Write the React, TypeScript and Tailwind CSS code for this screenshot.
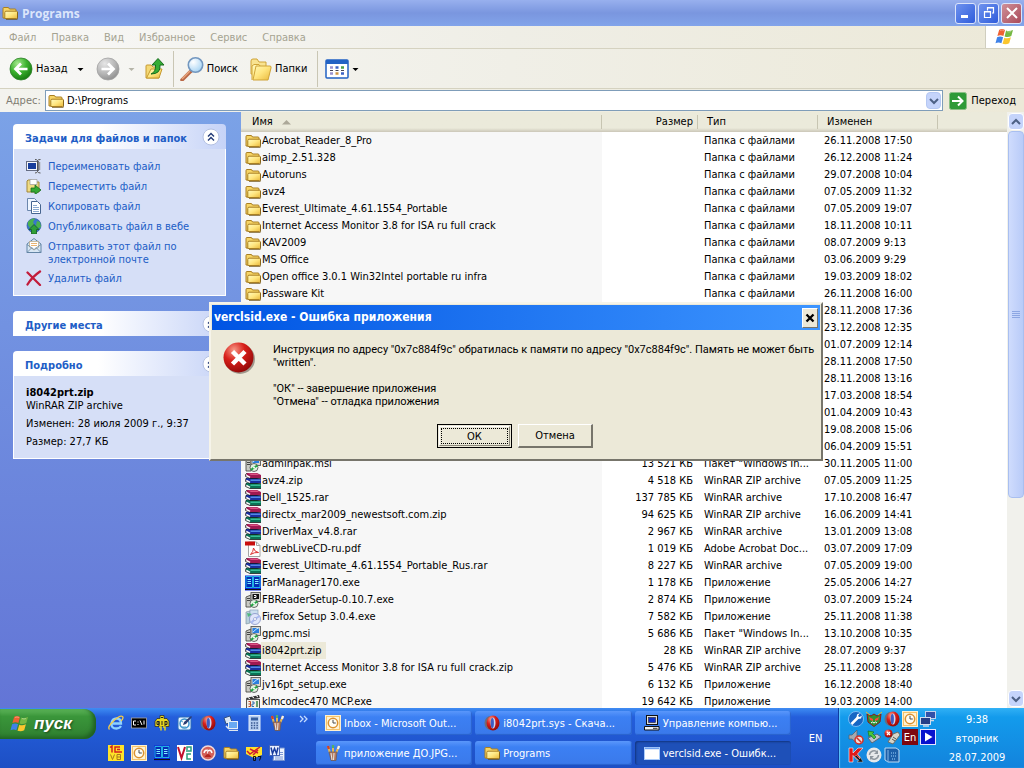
import type { ReactNode } from "react";

type P = { children?: ReactNode; size?: string; box?: string };

function Svg({ children, size = "size-4", box = "0 0 16 16" }: P) {
  return (
    <svg className={`${size} block shrink-0`} viewBox={box} fill="none" aria-hidden="true">
      {children}
    </svg>
  );
}

function Defs() {
  return (
    <svg className="absolute size-0" aria-hidden="true">
      <defs>
        <linearGradient id="gold" x1="0" y1="0" x2="1" y2="1">
          <stop offset="0" stopColor="#fffbc0" />
          <stop offset=".5" stopColor="#ffe680" />
          <stop offset="1" stopColor="#e9b83a" />
        </linearGradient>
        <radialGradient id="green" cx=".35" cy=".25" r=".8">
          <stop offset="0" stopColor="#a5e88f" />
          <stop offset=".5" stopColor="#3cb32f" />
          <stop offset="1" stopColor="#14780f" />
        </radialGradient>
        <radialGradient id="grey" cx=".35" cy=".25" r=".8">
          <stop offset="0" stopColor="#e6e6e6" />
          <stop offset=".6" stopColor="#b5b5b5" />
          <stop offset="1" stopColor="#8e8e8e" />
        </radialGradient>
        <radialGradient id="red" cx=".35" cy=".25" r=".8">
          <stop offset="0" stopColor="#f79a88" />
          <stop offset=".45" stopColor="#d81f1a" />
          <stop offset="1" stopColor="#8f0808" />
        </radialGradient>
        <radialGradient id="glass" cx=".35" cy=".3" r=".8">
          <stop offset="0" stopColor="#ffffff" />
          <stop offset="1" stopColor="#9fd0f3" />
        </radialGradient>
      </defs>
    </svg>
  );
}

const Folder = ({ size }: { size?: string }) => (
  <Svg size={size}>
    <path d="M1 13V3.5Q1 2.5 2 2.5h4Q7 2.5 7.5 4H13q1 0 1 1v8z" fill="#f6d465" stroke="#a97f22" />
    <path d="M2.8 13.5V7.5q0-1.3 1.2-1.3h10.500q1 0 1 1v5.300q0 1-1 1z" fill="url(#gold)" stroke="#a97f22" />
    <path d="M4 14.500h11.500M15.700 7v7" stroke="#6d5012" strokeWidth=".7" />
  </Svg>
);

const Books = () => (
  <Svg>
    <path d="M2 0h10l4 2v3H5L1 3z" fill="#a01a52" />
    <path d="M3 .5h8.500l3 1.500H6z" fill="#dd5584" />
    <path d="M1 5h11l4 1v4H5L1 8z" fill="#1a2fa0" />
    <path d="M5.500 6.500h10V8h-10z" fill="#4f8ae4" />
    <path d="M1 10h11l4 1v4.500H5L1 13z" fill="#0a7355" />
    <path d="M5.500 11.500h10V13h-10z" fill="#38bd95" />
    <path d="M1.300 2.500l3.700 2M1.300 7.500l3.700 2M1.300 12.500l3.700 2" stroke="#fff" strokeWidth="1.600" />
    <path d="M2 0L.5 1.500v2L5 5.500h11M1.500 5L.5 6.500v2l4.500 2h11M1.500 10L.5 11.500v2l4.500 2h11" stroke="#111" strokeWidth=".7" />
  </Svg>
);

const Msi = ({ dark }: { dark?: boolean }) => (
  <Svg>
    <path d="M1 5l5-2v12H1z" fill="#c9cac5" stroke="#4c4c48" strokeWidth=".9" />
    <path d="M2 6.500h3M2 8.500h3" stroke="#444" />
    <rect x="6" y=".5" width="9.500" height="9" fill="#d6d6d0" stroke="#5a5a58" strokeWidth=".9" />
    <rect x="7.500" y="2" width="6.500" height="5" fill={dark ? "#111" : "#2a7fe0"} />
    <path d={dark ? "M9 3.500h2v2H9" : "M8 6l4-3.500h1.500"} stroke={dark ? "#fff" : "#bfe6ff"} />
    <circle cx="9" cy="11.500" r="4" fill="#e2f2e2" stroke="#444" strokeWidth=".8" />
    <path d="M9 11.500l3.500-2M9 11.500l-3 2.500" stroke="#23a442" strokeWidth="2" />
    <circle cx="9" cy="11.500" r="1" fill="#fff" />
  </Svg>
);

const Pdf = () => (
  <Svg>
    <path d="M3.500 1h8l3.500 3.500V15.500H3.500z" fill="#fff" stroke="#a5a5a5" />
    <path d="M11.500 1v3.500H15" stroke="#a5a5a5" />
    <path d="M0 .5h10v4H0z" fill="#c80d0d" />
    <path d="M5.500 13.500q3-3 3-6.500q1 4 5 4.500-4-.5-8 2z" stroke="#d33" />
  </Svg>
);

const Far = () => (
  <Svg>
    <path d="M0 .5h16v15H0z" fill="#0a24d8" />
    <path d="M1 1.500h6.500v11H1zM8.500 1.500H15v11H8.500z" fill="#062bb4" stroke="#27d6ee" strokeWidth=".8" />
    <path d="M2.500 4.500h3.500M2.500 6.500h3.500M2.500 8.500h3.500M10 4.500h3.500M10 6.500h3.500M10 8.500h3.500" stroke="#7ff0ff" />
    <path d="M0 14.500h16" stroke="#111" />
  </Svg>
);

const Firefox = () => (
  <Svg>
    <path d="M1 3l4-1v12l-4 1z" fill="#b9d0dc" stroke="#8296a4" strokeWidth=".7" />
    <rect x="5" y="1" width="8" height="6" fill="#ccdff0" stroke="#8aa3ba" strokeWidth=".7" />
    <path d="M2 4l5 1-4 3z" fill="#4fb77e" />
    <circle cx="10" cy="10" r="5.500" fill="#dfe6fa" stroke="#8492c7" strokeWidth=".8" />
    <path d="M10 10l4.500-3M10 10l-4 4" stroke="#a9b9f0" strokeWidth="2" />
    <circle cx="10" cy="10" r="1.500" fill="#fff" stroke="#8492c7" strokeWidth=".6" />
  </Svg>
);

const Codec = () => (
  <Svg>
    <path d="M1 4l13-3 .8 3L2 6z" fill="#333" />
    <path d="M3 3.500l2 1.500M7 2.500l2 1.500M11 1.500l2 1.500" stroke="#fff" />
    <rect x="1.500" y="5.500" width="13" height="9" fill="#f3f0e6" stroke="#555" />
    <path d="M3.500 7.500h2v5h-2M3.500 10h2" stroke="#b84b2b" />
    <path d="M7 8h2v2H7v2.500h2" stroke="#2d6db4" />
    <path d="M12 7v6" stroke="#3a8441" strokeWidth="1.500" />
  </Svg>
);

const Flag = ({ size }: { size?: string }) => (
  <Svg size={size} box="0 0 20 18">
    <path d="M4.200 1.800Q7 .2 10 1.900L8.400 8Q5.500 6.500 2.400 8z" fill="#ef6132" />
    <path d="M11.100 2.400Q14 3.800 18 1.900L16.300 8Q13 9.600 9.600 8.400z" fill="#75b843" />
    <path d="M2.100 9.200Q5.200 7.600 8.100 9.300L6.400 15.200Q3.500 13.700.5 15.200z" fill="#3f82e8" />
    <path d="M9.300 9.700Q12.300 11.100 15.900 9.300l-1.700 6Q11 17 7.500 15.800z" fill="#fbc62e" />
    <path d="M5 2.500Q7 1.500 9 2.500M12 3.500q2 1 4 0" stroke="#fff" opacity=".35" />
  </Svg>
);

const Opera = () => (
  <Svg>
    <ellipse cx="6.500" cy="8" rx="6" ry="7" fill="#6d6d7a" />
    <ellipse cx="9" cy="8" rx="6.500" ry="7.500" fill="url(#red)" />
    <ellipse cx="9" cy="8" rx="2.500" ry="5.500" fill="#ccd7f5" />
    <ellipse cx="8.300" cy="8" rx="1.600" ry="5" fill="#3d5cc4" />
  </Svg>
);

const Outlook = () => (
  <Svg>
    <rect x=".5" y=".5" width="15" height="15" fill="#f7c46b" stroke="#fff1cf" />
    <rect x="2" y="2" width="12" height="12" fill="#fff3d4" />
    <circle cx="8" cy="8" r="4.700" fill="#fffdf4" stroke="#db9130" strokeWidth="1.500" />
    <path d="M8 4.800V8h2.800" stroke="#4a4a4a" />
  </Svg>
);

const Brushes = () => (
  <Svg>
    <path d="M5 8L3 1M8 8V0M11 8l3-7" stroke="#e6b653" strokeWidth="2" />
    <path d="M3 1l.8 3" stroke="#d43c27" strokeWidth="2.200" />
    <path d="M8 0v3" stroke="#4fb069" strokeWidth="2.200" />
    <path d="M14 1l-1 3" stroke="#f0f0f0" strokeWidth="2.200" />
    <path d="M4 7h8l-1 8.500H6z" fill="#b57a60" stroke="#6a5851" strokeWidth=".7" />
    <path d="M6 8l1 7M9 8l-.5 7" stroke="#e6e6e6" />
  </Svg>
);

const Computer = () => (
  <Svg>
    <rect x="2.500" y=".5" width="11" height="9" fill="#dfdfdf" stroke="#111" />
    <rect x="4.500" y="2.500" width="7" height="5" fill="#0b2ec7" stroke="#223" strokeWidth=".6" />
    <path d="M.5 11.500h14.500v3.500H.5z" fill="#f2f2f2" stroke="#111" />
    <path d="M9 13.300h4.500" stroke="#333" />
  </Svg>
);

const WindowIcon = () => (
  <Svg>
    <rect x=".5" y="2.500" width="15" height="12" fill="#fff" stroke="#aacbfa" />
    <path d="M1 3.500h14" stroke="#6ea0f0" strokeWidth="1.500" />
  </Svg>
);

const Rename = () => (
  <Svg>
    <rect x=".5" y="3.500" width="12" height="9" fill="#f5f7fc" stroke="#656d84" />
    <rect x="2" y="5" width="8" height="6" fill="#173d9c" />
    <path d="M9 1.500q2 0 2.500 1 .5-1 3-1M11.500 2.500v11M9 15q2 0 2.500-1.500.5 1.500 3 1.500" stroke="#555" />
    <path d="M13.500 4v8" stroke="#999" strokeWidth="1.500" />
  </Svg>
);
const Move = () => (
  <Svg>
    <path d="M1 14V3l1-1h4l1.500 2H13v10z" fill="#f0dc83" stroke="#a1873a" />
    <path d="M4 1.500h7v5H4z" fill="#fff" stroke="#999" strokeWidth=".7" />
    <path d="M5 10h4V7l6 5-6 4.500V14H5z" fill="#35a833" stroke="#176d1c" strokeWidth=".8" />
  </Svg>
);
const Copy = () => (
  <Svg>
    <path d="M1.500.5h7l2 2v10h-9z" fill="#eef5ff" stroke="#6b87ad" />
    <path d="M5.500 3.500h6l3 3v9h-9z" fill="#fff" stroke="#46658f" />
    <path d="M7 7.500h4M7 9.500h6M7 11.500h6M7 13.500h6" stroke="#8ba9ce" />
  </Svg>
);
const Publish = () => (
  <Svg>
    <circle cx="8" cy="7.500" r="7" fill="#3976cb" stroke="#2b579b" strokeWidth=".7" />
    <path d="M2 4q3-4 7-3.500L7 4l1 2-4 4-2-3zM11 3l3 1 1 5-4 2-1-4z" fill="#4bb34d" />
    <path d="M8 6.500l5 5h-2.500V16h-5v-4.500H3z" fill="#2f9f38" stroke="#145f1d" strokeWidth=".8" />
  </Svg>
);
const Mail = () => (
  <Svg>
    <path d="M1 6l7-5.500L15 6v8.500H1z" fill="#d8e7f5" stroke="#6385a5" />
    <path d="M3.500 3.500h9v6L8 12 3.500 9z" fill="#fff" stroke="#b9a37d" strokeWidth=".7" />
    <path d="M5 5.500h6M5 7.500h6" stroke="#e2a14e" strokeWidth=".8" />
    <path d="M1 6.500l7 5 7-5M1 14.500l5-5M15 14.500l-5-5" stroke="#6385a5" strokeWidth=".8" />
  </Svg>
);
const Delete = () => (
  <Svg>
    <path d="M1.500 2.500L14 15M14 1.500Q6 7 1.500 14.500" stroke="#c21c3b" strokeWidth="2.300" strokeLinecap="round" />
  </Svg>
);

const IE = () => (
  <Svg>
    <path d="M3.500 8.500h9.500Q13 3.500 8.500 3.500T3.500 8.500t5 5q3 0 4.500-2.500" stroke="#8ed2ff" strokeWidth="2.300" />
    <path d="M1.500 14.500Q-1 12 5.500 6T14.500 1.500Q16 3 13 6" stroke="#f5cb46" strokeWidth="1.300" />
  </Svg>
);
const Cmd = () => (
  <Svg>
    <rect x=".5" y="3" width="15" height="10" fill="#000" stroke="#a9a9a9" strokeWidth=".8" />
    <path d="M5 6H2.500v4H5M7 6.500v1M7 9v1M9 5.500l2 4.500M13 5.500v4" stroke="#fff" />
  </Svg>
);
const Qip = () => (
  <Svg>
    <path d="M6 .5h4v3h3l2 3v5H1v-5l2-3h3z" fill="#e8d820" stroke="#222" strokeWidth=".7" />
    <path d="M3 6.500h2v3H3zM8 6v4M11 6.500h2v3h-2M5 6v6M11 6v6M7 2.500h2" stroke="#222" />
    <path d="M5 12h2v3.500M9 12h2v3.500" stroke="#e8d820" strokeWidth="1.500" />
  </Svg>
);
const Desktop = () => (
  <Svg>
    <rect x="1" y="2" width="13" height="13" rx="2" fill="#e4f3ff" stroke="#2b6db8" />
    <circle cx="7.500" cy="8.500" r="4.500" fill="#fff" stroke="#3c93ce" strokeWidth="1.500" />
    <path d="M6 10l1-3 7-6 1 1-6 7z" fill="#2c3f74" />
    <path d="M4 6l2 1M5 12h4" stroke="#53a4c8" />
  </Svg>
);
const Network = () => (
  <Svg>
    <path d="M1 3l6-2 2 6-6 2z" fill="#dce7f4" stroke="#315083" />
    <rect x="5.500" y="6.500" width="9" height="7" fill="#6aa9f2" stroke="#e9eef6" />
    <path d="M3 11l3 3M6 15.500h9" stroke="#dfe6ef" strokeWidth="1.500" />
  </Svg>
);
const Calc = () => (
  <Svg>
    <rect x="3" y=".5" width="11" height="15" fill="#b4cdf0" stroke="#e2edfb" />
    <rect x="5" y="2.500" width="7" height="3" fill="#365f9e" />
    <path d="M5 8h7M5 10.500h7M5 13h7" stroke="#36568f" strokeWidth="1.500" strokeDasharray="1.500 1.200" />
  </Svg>
);
const OneC = () => (
  <Svg>
    <rect width="16" height="16" fill="#ffe329" />
    <path d="M2 2.500L4 1v6.500M12 2H7v5h7M9 4.500h3" stroke="#d32020" strokeWidth="1.500" />
    <path d="M2.500 9.500l2 5 2-5M9 9.500h3.500v5H9zM9 12h3.500" stroke="#a8791d" />
  </Svg>
);
const Vnc = () => (
  <Svg>
    <rect width="16" height="16" fill="#fff" />
    <path d="M1 2l3.500 11L8 2" stroke="#c2102c" strokeWidth="2" />
    <path d="M10 7V2h4v4h-3M14 9h-4v5h4" stroke="#28a07c" strokeWidth="1.500" />
  </Svg>
);
const RedBall = () => (
  <Svg>
    <circle cx="8" cy="8" r="7" fill="#d2605a" stroke="#f2d9d9" strokeWidth="1.500" />
    <path d="M4 8q1-4 4-2 3-2 4 2" stroke="#fff" strokeWidth="1.500" />
    <path d="M4.500 12Q8 6 11.500 12z" fill="#b3261e" />
    <path d="M7.500 4.500v4" stroke="#f7dedd" />
  </Svg>
);
const V7 = () => (
  <Svg>
    <path d="M0 2h16v8L8 13 0 9z" fill="#ffe12b" />
    <path d="M1 6l3 3 10-7M4 4l8 4M7 10l5-5" stroke="#cf1b34" strokeWidth="1.500" />
    <path d="M7.500 11.500h2v4h-2zM12 11.500h3l-1.500 4" stroke="#111" />
  </Svg>
);
const Word = () => (
  <Svg>
    <path d="M6 3h9.500v12.500H4z" fill="#edf3ff" stroke="#7391cf" />
    <path d="M10 7.500h4M10 9.500h4M6 12h8M6 14h8" stroke="#5d7dc8" strokeWidth=".8" />
    <rect x=".5" y=".5" width="10" height="10" fill="#e7efff" stroke="#4766b6" />
    <path d="M2 2.500l1.500 6 2-5 2 5 1.500-6" stroke="#173b9e" strokeWidth="1.500" />
  </Svg>
);
const Wrench = () => (
  <Svg>
    <circle cx="8" cy="8" r="7.500" fill="#1666c4" stroke="#9fd1ff" strokeWidth=".7" />
    <path d="M3.500 13L10 6.500" stroke="#fff" strokeWidth="2.500" />
    <path d="M9 3.500L8.500 7l1.500 1 3-.5 1-3-2.500 1.500-1.500-1L12 2z" fill="#fff" />
  </Svg>
);
const Bug = () => (
  <Svg>
    <path d="M1 3l4 2 3-2 3 2 4-2-1 8-6 4.500L2 11z" fill="#2f9133" stroke="#8c1818" />
    <path d="M3 6l4 2v2L4 9zM13 6L9 8v2l3-1z" fill="#ff4938" />
    <path d="M5 12l1.500-1L8 12l1.500-1 1.500 1" stroke="#fff" />
    <path d="M0 1l4 3M16 1l-4 3" stroke="#e5b932" />
  </Svg>
);
const Screens = () => (
  <Svg>
    <rect x="5.500" y=".5" width="10" height="7" fill="#3151a8" stroke="#c3d3ec" />
    <rect x=".5" y="6.500" width="10" height="7" fill="#263e87" stroke="#d3deee" />
    <path d="M3 15h6M11 9.500h3" stroke="#cdd8e8" strokeWidth="1.500" />
  </Svg>
);
const Muted = () => (
  <Svg>
    <path d="M1 6h3l5-5v13L4 10H1z" fill="#a5a9af" stroke="#555c67" strokeWidth=".7" />
    <circle cx="11" cy="11" r="4" fill="#f1dbd8" stroke="#d32e25" strokeWidth="1.500" />
    <path d="M8.500 8.500l5 5" stroke="#d32e25" strokeWidth="1.500" />
  </Svg>
);
const Eject = () => (
  <Svg>
    <path d="M2 9l9-4 4 3-9 6z" fill="#bcc2ca" stroke="#5d6673" />
    <path d="M2 2l6 1-1.500 1.500L10 8 8 10 4.500 6 3 7.500z" fill="#49c63b" stroke="#16751c" strokeWidth=".7" />
  </Svg>
);
const Cable = () => (
  <Svg>
    <path d="M9 5l5-2 2 3-7 9-5-2z" fill="#d7d5ca" stroke="#6d6d67" />
    <path d="M9 8l3 2M8 10l3 2" stroke="#555" />
    <circle cx="4.500" cy="4.500" r="4" fill="url(#red)" />
    <path d="M3 3l3 3M6 3L3 6" stroke="#fff" strokeWidth="1.200" />
  </Svg>
);
const Lang = () => (
  <Svg>
    <rect width="16" height="16" fill="#7d0710" />
    <text x="8" y="12" textAnchor="middle" fontFamily="DejaVu Sans Condensed, sans-serif" fontSize="11" fill="#fff">
      En
    </text>
  </Svg>
);
const Play = () => (
  <Svg>
    <rect x=".5" y=".5" width="15" height="15" fill="#0712ce" stroke="#e6e6ff" />
    <path d="M5 3.500v9L12.500 8z" fill="#fff" />
  </Svg>
);
const Kaspersky = () => (
  <Svg>
    <path d="M1 1h4v5l5-5h5L9.500 7l3 4-3 2L5 8.500V15H1z" fill="#e01919" stroke="#fff" strokeWidth=".6" />
    <path d="M8 8l4 4V9.500l3 5.500H9l2-1.500-4-4z" fill="#111" stroke="#ddd" strokeWidth=".4" />
  </Svg>
);
const Sync = () => (
  <Svg>
    <circle cx="8" cy="8" r="7.500" fill="#e6e8ea" />
    <path d="M3.500 8a4.500 4.500 0 018-2.500M12.500 8a4.500 4.500 0 01-8 2.500" stroke="#8e969e" strokeWidth="1.500" />
    <path d="M12 3v4H8zM4 13V9h4z" fill="#8e969e" />
  </Svg>
);
const BlueBook = () => (
  <Svg>
    <path d="M1 1h11l3 2v12H4l-3-2z" fill="#1c5fa9" stroke="#bedbf3" />
    <path d="M4 3v12" stroke="#85b9e8" />
    <path d="M7 6h5M7 9h5M8 12h4" stroke="#9ed5ff" strokeDasharray="1 1" />
  </Svg>
);

const DownTri = ({ faded }: { faded?: boolean }) => (
  <Svg size="size-2" box="0 0 8 8">
    <path d="M1.500 3h6L4.500 6z" fill={faded ? "#b5b4a8" : "#000"} />
  </Svg>
);

const icons = { folder: Folder, books: Books, msi: Msi, fb: () => <Msi dark />, pdf: Pdf, far: Far, firefox: Firefox, codec: Codec };
type Row = [keyof typeof icons | null, string, string, string, string];
const dir = "Папка с файлами";
const rar = "WinRAR ZIP archive";
const exe = "Приложение";
const rows: Row[] = [
  ["folder", "Acrobat_Reader_8_Pro", "", dir, "26.11.2008 17:50"],
  ["folder", "aimp_2.51.328", "", dir, "26.12.2008 11:24"],
  ["folder", "Autoruns", "", dir, "29.07.2008 10:04"],
  ["folder", "avz4", "", dir, "07.05.2009 11:32"],
  ["folder", "Everest_Ultimate_4.61.1554_Portable", "", dir, "07.05.2009 19:07"],
  ["folder", "Internet Access Monitor 3.8 for ISA ru full crack", "", dir, "18.11.2008 10:11"],
  ["folder", "KAV2009", "", dir, "08.07.2009 9:13"],
  ["folder", "MS Office", "", dir, "03.06.2009 9:29"],
  ["folder", "Open office 3.0.1 Win32Intel portable ru infra", "", dir, "19.03.2009 18:02"],
  ["folder", "Passware Kit", "", dir, "26.11.2008 16:00"],
  [null, "", "", "", "28.11.2008 17:36"],
  [null, "", "", "", "23.12.2008 12:35"],
  [null, "", "", "", "01.07.2009 12:14"],
  [null, "", "", "", "28.11.2008 17:50"],
  [null, "", "", "", "28.11.2008 13:16"],
  [null, "", "", "", "17.03.2008 18:54"],
  [null, "", "", "", "01.04.2009 10:43"],
  [null, "", "", "", "19.08.2008 15:06"],
  [null, "", "", "", "06.04.2009 15:51"],
  ["msi", "adminpak.msi", "13 521 КБ", 'Пакет "Windows In...', "30.11.2005 11:00"],
  ["books", "avz4.zip", "4 518 КБ", rar, "07.05.2009 11:25"],
  ["books", "Dell_1525.rar", "137 785 КБ", "WinRAR archive", "17.10.2008 16:47"],
  ["books", "directx_mar2009_newestsoft.com.zip", "94 625 КБ", rar, "16.06.2009 14:41"],
  ["books", "DriverMax_v4.8.rar", "2 967 КБ", "WinRAR archive", "13.01.2009 13:08"],
  ["pdf", "drwebLiveCD-ru.pdf", "1 019 КБ", "Adobe Acrobat Doc...", "03.07.2009 17:09"],
  ["books", "Everest_Ultimate_4.61.1554_Portable_Rus.rar", "8 227 КБ", "WinRAR archive", "07.05.2009 19:00"],
  ["far", "FarManager170.exe", "1 178 КБ", exe, "25.05.2006 14:27"],
  ["fb", "FBReaderSetup-0.10.7.exe", "2 874 КБ", exe, "03.07.2009 15:24"],
  ["firefox", "Firefox Setup 3.0.4.exe", "7 582 КБ", exe, "25.11.2008 11:38"],
  ["msi", "gpmc.msi", "5 686 КБ", 'Пакет "Windows In...', "13.10.2008 10:35"],
  ["books", "i8042prt.zip", "28 КБ", rar, "28.07.2009 9:37"],
  ["books", "Internet Access Monitor 3.8 for ISA ru full crack.zip", "5 476 КБ", rar, "25.11.2008 13:28"],
  ["msi", "jv16pt_setup.exe", "6 132 КБ", exe, "16.12.2008 18:40"],
  ["codec", "klmcodec470 MCP.exe", "19 642 КБ", exe, "19.03.2009 14:00"],
];

function TitleBar() {
  const btn = "flex size-[21px] items-center justify-center rounded-[3px] border border-[#dbe4fb]";
  return (
    <header className="flex h-[26px] shrink-0 items-center bg-linear-to-b from-[#98b0ee] via-[#7a96df] to-[#82a4ea] pr-0.5 pl-0.5">
      <Folder />
      <h1 className="ml-1 flex-1 [font-family:'Open_Sans',sans-serif] text-[12px] font-bold text-[#dce6fb]">Programs</h1>
      <div className="flex gap-0.5">
        <button aria-label="Свернуть" className={`${btn} bg-linear-to-br from-[#6f92ee] to-[#2f5bdb]`}>
          <Svg><path d="M3 11.500h7" stroke="#fff" strokeWidth="3" /></Svg>
        </button>
        <button aria-label="Восстановить" className={`${btn} bg-linear-to-br from-[#6f92ee] to-[#2f5bdb]`}>
          <Svg><path d="M6.500 5.500v-3h6v5.500H11M6 3h7M3.500 6.500h6v6h-6zM3 7h7" stroke="#fff" strokeWidth="1.200" /></Svg>
        </button>
        <button aria-label="Закрыть" className={`${btn} bg-linear-to-br from-[#cf9099] to-[#a9495a]`}>
          <Svg><path d="M3 3l10 10M13 3L3 13" stroke="#fff" strokeWidth="2" /></Svg>
        </button>
      </div>
    </header>
  );
}

function Menu() {
  return (
    <nav className="flex h-[23px] shrink-0 border-b border-[#d5d2c0] bg-linear-to-r from-[#f8f8f7] via-[#efeee6] to-[#ece9d8]">
      <div className="flex flex-1 items-center gap-[15px] pl-[9px] text-[#a5a391]">
        {["Файл", "Правка", "Вид", "Избранное", "Сервис", "Справка"].map((m) => (
          <button key={m}>{m}</button>
        ))}
      </div>
      <div className="flex w-[39px] items-center justify-center border-l border-[#d0cebf] bg-white">
        <Flag size="size-5" />
      </div>
    </nav>
  );
}

function Toolbar() {
  return (
    <div className="flex h-10 shrink-0 items-center border-b border-[#d5d2c0] bg-linear-to-r from-[#f7f7f5] via-[#f0efe7] to-[#ece9d8] pl-[9px]">
      <button className="flex items-center gap-[3px]">
        <Svg size="size-6" box="0 0 24 24">
          <circle cx="12" cy="12" r="11" fill="url(#green)" stroke="#2e8029" strokeWidth=".8" />
          <path d="M18.500 12H7M12 6.500L6.500 12l5.500 5.500" stroke="#fff" strokeWidth="2.700" />
        </Svg>
        Назад
      </button>
      <button aria-label="История назад" className="ml-2"><DownTri /></button>
      <button aria-label="Вперед" className="ml-3">
        <Svg size="size-6" box="0 0 24 24">
          <circle cx="12" cy="12" r="11" fill="url(#grey)" stroke="#a2a2a2" strokeWidth=".8" />
          <path d="M5.500 12H17M12 6.500l5.500 5.500-5.500 5.500" stroke="#fff" strokeWidth="2.700" />
        </Svg>
      </button>
      <button aria-label="История вперед" className="ml-[7px]"><DownTri faded /></button>
      <button aria-label="Вверх" className="ml-2">
        <Svg size="size-6" box="0 0 24 24">
          <path d="M3 21V9q0-1 1-1h4l2 2h6v11z" fill="#f4d976" stroke="#c69a31" />
          <path d="M3.500 21L8 12h11l-3 9z" fill="url(#gold)" stroke="#c69a31" />
          <path d="M8 17q5-2 4.500-9H9l6-6.500L21 8h-4q1 9-9 9z" fill="#35ad35" stroke="#176c1c" />
        </Svg>
      </button>
      <div className="mr-1.5 ml-1.5 h-9 border-l border-[#c9c6b4]" />
      <button className="flex items-center gap-[3px]">
        <Svg size="size-6" box="0 0 24 24">
          <path d="M2 23l9-9" stroke="#ba6847" strokeWidth="3.500" strokeLinecap="round" />
          <path d="M2 22l8-8" stroke="#e7a67e" strokeWidth="1.500" />
          <circle cx="15.500" cy="8" r="7.200" fill="url(#glass)" stroke="#7397bf" strokeWidth="1.600" />
        </Svg>
        Поиск
      </button>
      <button className="ml-2.5 flex items-center gap-[3px]">
        <Svg size="size-6" box="0 0 24 24">
          <path d="M3 17V4q0-2 2-2h4l2 3h7v12z" fill="#f8e391" stroke="#cfa438" />
          <path d="M5 23L8 9h14q1.500 0 1 2l-3 12zM4 23V9l2-1.500h5L12 9" fill="url(#gold)" stroke="#cfa438" />
        </Svg>
        Папки
      </button>
      <div className="mr-[7px] ml-2.5 h-9 border-l border-[#c9c6b4]" />
      <button aria-label="Вид значков" className="flex items-center gap-0.5">
        <Svg size="h-5 w-6" box="0 0 24 20">
          <rect x="1" y="1" width="22" height="18" rx="1" fill="#fff" stroke="#2262c4" strokeWidth="1.500" />
          <path d="M1 3h22" stroke="#2262c4" strokeWidth="4" />
          <path d="M5 8.500h3M5 14.500h3" stroke="#9a93d0" strokeWidth="2.500" />
          <path d="M10.500 8.500h3M16 14.500h3" stroke="#3c63c5" strokeWidth="2.500" />
          <path d="M16 8.500h3" stroke="#4b9d48" strokeWidth="2.500" />
          <path d="M10.500 14.500h3" stroke="#cf9541" strokeWidth="2.500" />
          <path d="M5 11.500h3M10.500 11.500h3M16 11.500h3" stroke="#445" />
        </Svg>
        <DownTri />
      </button>
    </div>
  );
}

function AddressBar() {
  return (
    <form className="flex h-[23px] shrink-0 items-center bg-linear-to-r from-[#f3f3ee] to-[#ece9d8]">
      <label htmlFor="address" className="w-[45px] pl-1.5 text-[#7f7c73]">Адрес:</label>
      <div className="flex h-[21px] flex-1 items-center border border-[#7f9db9] bg-white pr-px pl-0.5">
        <Folder />
        <input id="address" defaultValue="D:\Programs" className="min-w-0 flex-1 pl-[3px] outline-none" />
        <button type="button" aria-label="Список адресов" className="flex h-[17px] w-[15px] items-center justify-center rounded-sm border border-[#b5c8f3] bg-[#c5d4fb]">
          <Svg size="size-3" box="0 0 12 12"><path d="M2 4l4 4 4-4" stroke="#4d6185" strokeWidth="2" /></Svg>
        </button>
      </div>
      <button type="button" className="mx-1.5 flex items-center gap-1 pr-0.5">
        <Svg size="size-[18px]" box="0 0 18 18">
          <rect x=".5" y=".5" width="17" height="17" rx="2" fill="#2f9a38" stroke="#8abf86" />
          <path d="M3 9h10M9 4.500L13.500 9 9 13.500" stroke="#fff" strokeWidth="2" />
        </Svg>
        Переход
      </button>
    </form>
  );
}

function Panel({ title, children }: { title: string; children?: ReactNode }) {
  return (
    <section>
      <h2 className="flex h-[25px] items-center justify-between rounded-t-[4px] bg-linear-to-r from-white from-40% to-[#c6d3f7] pr-1.5 pl-3 font-bold text-[#215dc6]">
        <span className="pt-1">{title}</span>
        <button aria-label={title}>
          <Svg size="size-[18px]" box="0 0 18 18">
            <circle cx="9" cy="9" r="8" fill="#fff" stroke="#b4c1e2" />
            <path d="M6 8.500l3-3 3 3M6 12.500l3-3 3 3" stroke="#203876" strokeWidth="1.400" />
          </Svg>
        </button>
      </h2>
      {children && <div className="border border-t-0 border-white bg-[#d6dff7]">{children}</div>}
    </section>
  );
}

const tasks: [string, () => ReactNode][] = [
  ["Переименовать файл", Rename],
  ["Переместить файл", Move],
  ["Копировать файл", Copy],
  ["Опубликовать файл в вебе", Publish],
  ["Отправить этот файл по электронной почте", Mail],
  ["Удалить файл", Delete],
];

function Sidebar() {
  return (
    <aside className="flex w-[241px] shrink-0 flex-col gap-[15px] overflow-hidden bg-linear-to-b from-[#7ba2e7] to-[#6375d6] pt-3 pr-[15px] pl-[13px]">
      <Panel title="Задачи для файлов и папок">
        <ul className="flex flex-col gap-1 px-3 pt-[9px] pb-[9px]">
          {tasks.map(([label, Icon]) => (
            <li key={label}>
              <a href="#" className="flex gap-1.5 leading-[13px] text-[#215dc6]">
                <Icon />
                <span className="pt-0.5">{label}</span>
              </a>
            </li>
          ))}
        </ul>
      </Panel>
      <Panel title="Другие места" />
      <Panel title="Подробно">
        <div className="px-3 pt-2.5 pb-2.5 leading-[13px]">
          <p className="font-bold">i8042prt.zip</p>
          <p>WinRAR ZIP archive</p>
          <p className="mt-[5px]">Изменен: 28 июля 2009 г., 9:37</p>
          <p className="mt-[5px]">Размер: 27,7 КБ</p>
        </div>
      </Panel>
    </aside>
  );
}

function FileList() {
  const th = "h-5 bg-linear-to-b from-[#ebeadb] from-80% to-[#cbc7b8] p-0 font-normal";
  const inner = "h-3.5 border-r border-[#c7c5b2] leading-[14px]";
  return (
    <main className="min-w-0 flex-1 overflow-hidden bg-white">
      <table className="w-full table-fixed border-collapse whitespace-nowrap">
        <colgroup>
          <col className="w-[361px]" />
          <col className="w-24" />
          <col className="w-[120px]" />
          <col className="w-[120px]" />
          <col />
        </colgroup>
        <thead>
          <tr>
            <th className={`${th} text-left`}>
              <div className={`${inner} flex items-center gap-2 pl-[11px]`}>
                Имя
                <Svg size="h-2 w-3" box="0 0 12 8"><path d="M1 6.500L5.500 2 10 6.500z" fill="#aca899" /></Svg>
              </div>
            </th>
            <th className={`${th} text-right`}><div className={`${inner} pr-1`}>Размер</div></th>
            <th className={`${th} text-left`}><div className={`${inner} pl-[9px]`}>Тип</div></th>
            <th className={`${th} text-left`}><div className={`${inner} pl-[9px]`}>Изменен</div></th>
            <th className={th} />
          </tr>
        </thead>
        <tbody>
          {rows.map(([icon, name, size, type, date], i) => {
            const Icon = icon ? icons[icon] : null;
            return (
              <tr key={i} className="h-[17px] leading-[17px]">
                <td className="bg-[#f7f7f7] p-0 pl-1">
                  {Icon && (
                    <div className="flex h-[17px] items-center">
                      <Icon />
                      <span className={name === "i8042prt.zip" ? "bg-[#ece9d8] pr-1 pl-px" : "pl-px"}>{name}</span>
                    </div>
                  )}
                </td>
                <td className="p-0 pr-[5px] text-right">{size}</td>
                <td className="p-0 pl-1.5">{type}</td>
                <td className="p-0 pl-1.5">{date}</td>
                <td className="p-0" />
              </tr>
            );
          })}
        </tbody>
      </table>
    </main>
  );
}

function Scrollbar() {
  const b = "flex h-[17px] w-4 shrink-0 items-center justify-center rounded-sm border border-white bg-[#c5d4fb]";
  return (
    <div className="flex w-[17px] shrink-0 flex-col items-center gap-px bg-[#f1f1ec] py-px">
      <button aria-label="Прокрутить вверх" className={b}>
        <Svg size="size-3" box="0 0 12 12"><path d="M2 8l4-4 4 4" stroke="#4d6185" strokeWidth="2" /></Svg>
      </button>
      <div className="flex w-4 flex-[368] flex-col items-center justify-center gap-px rounded-sm border border-[#a9bff0] bg-linear-to-r from-[#cfdcfd] to-[#b9cbf8]">
        {[0, 1, 2, 3].map((n) => (
          <span key={n} className="h-px w-2 bg-[#8ca6e3]" />
        ))}
      </div>
      <div className="flex-[192]" />
      <button aria-label="Прокрутить вниз" className={b}>
        <Svg size="size-3" box="0 0 12 12"><path d="M2 4l4 4 4-4" stroke="#4d6185" strokeWidth="2" /></Svg>
      </button>
    </div>
  );
}

function ErrorDialog() {
  return (
    <div
      role="dialog"
      aria-labelledby="dialog-title"
      className="absolute top-[302px] left-[209px] w-[614px] border-2 border-t-[#f6f4ea] border-r-[#77756b] border-b-[#77756b] border-l-[#f6f4ea] bg-[#ece9d8] p-px"
    >
      <div className="flex h-[25px] items-center justify-between bg-linear-to-r from-[#0054e3] to-[#3d95ff] pr-0.5 pl-0.5">
        <h2 id="dialog-title" className="text-[12px] font-bold text-white">verclsid.exe - Ошибка приложения</h2>
        <button aria-label="Закрыть окно" className="flex h-5 w-4 items-center justify-center border border-t-white border-r-[#77756b] border-b-[#77756b] border-l-white bg-[#ece9d8]">
          <Svg size="size-3" box="0 0 12 12"><path d="M2.500 2.500l7 7M9.500 2.500l-7 7" stroke="#000" strokeWidth="2.300" /></Svg>
        </button>
      </div>
      <div className="flex gap-[18px] pt-3 pl-[11px]">
        <Svg size="size-8" box="0 0 32 32">
          <circle cx="17" cy="17" r="15" fill="#6d625c" opacity=".6" />
          <circle cx="15.500" cy="15.500" r="15" fill="url(#red)" />
          <path d="M9.500 9.500l12.500 12.500M22 9.500L9.500 22" stroke="#fff" strokeWidth="4.500" />
        </Svg>
        <div className="pt-px [font-family:Roboto,sans-serif] leading-[13px]">
          <p>Инструкция по адресу "0x7c884f9c" обратилась к памяти по адресу "0x7c884f9c". Память не может быть "written".</p>
          <p className="mt-[13px]">"ОК" -- завершение приложения</p>
          <p>"Отмена" -- отладка приложения</p>
        </div>
      </div>
      <div className="flex justify-center gap-1.5 pt-4 pr-0.5 pb-2.5">
        <button className="h-6 w-[75px] border border-black bg-[#ece9d8] p-px">
          <span className="flex h-full items-center justify-center border border-t-white border-r-[#8b887a] border-b-[#8b887a] border-l-white p-px">
            <span className="flex h-full w-full items-center justify-center border border-dotted border-black">ОК</span>
          </span>
        </button>
        <button className="h-6 w-[75px] border-t border-r-2 border-b-2 border-l border-t-white border-r-[#77756b] border-b-[#77756b] border-l-white bg-[#ece9d8]">Отмена</button>
      </div>
    </div>
  );
}

const quick: (() => ReactNode)[] = [IE, Cmd, Qip, Desktop, Opera, Network, Calc, Brushes, OneC, Outlook, Far, Vnc, RedBall, Folder, V7, Word];
const windows: [() => ReactNode, string][] = [
  [Outlook, "Inbox - Microsoft Out..."],
  [Opera, "i8042prt.sys - Скача..."],
  [Computer, "Управление компью..."],
  [Brushes, "приложение ДО.JPG..."],
  [Folder, "Programs"],
  [WindowIcon, "verclsid.exe - Ошибк..."],
];
const tray: (() => ReactNode)[] = [Wrench, Bug, Opera, Outlook, Screens, Muted, Eject, Cable, Lang, Play, Kaspersky, Sync, BlueBook];

function Taskbar() {
  return (
    <footer className="flex h-[60px] shrink-0 bg-linear-to-b from-[#3f8cf3] via-[#245edb] via-15% to-[#1d4fc4] text-white">
      <button className="mt-px flex h-[30px] w-24 items-center gap-1 rounded-r-xl bg-linear-to-b from-[#5eb65a] via-[#3a963a] via-25% to-[#2f7f30] pl-2.5 shadow-[inset_-3px_-2px_4px_#1f5f22]">
        <Flag size="size-5" />
        <span className="[font-family:'Liberation_Sans',sans-serif] text-[17px] leading-6 font-bold italic [text-shadow:1px_1px_2px_#1c4a1c]">пуск</span>
      </button>
      <div className="ml-3 flex w-[205px] pt-[7px]">
        <div className="grid grid-cols-8 content-start gap-x-[7px] gap-y-3.5">
          {quick.map((Icon, i) => (
            <button key={i} aria-label={`Ярлык ${i + 1}`}><Icon /></button>
          ))}
        </div>
        <button aria-label="Другие ярлыки" className="ml-3.5 self-start">
          <Svg size="size-2.5" box="0 0 10 10"><path d="M1 1l3 3-3 3M5 1l3 3-3 3" stroke="#c4dcff" strokeWidth="1.300" /></Svg>
        </button>
      </div>
      <div className="ml-[3px] grid w-[475px] grid-cols-3 content-start gap-x-[3px] gap-y-1.5 pt-[3px]">
        {windows.map(([Icon, label], i) => (
          <button
            key={label}
            className={`flex h-6 items-center gap-[3px] rounded-[3px] pl-[9px] whitespace-nowrap ${
              i === 5
                ? "bg-[#1e50b8] shadow-[inset_1px_1px_2px_#12347f]"
                : "bg-linear-to-b from-[#5a97fb] via-[#3c80f3] via-25% to-[#3a79ea] shadow-[inset_-1px_-1px_1px_#2a62cc]"
            }`}
          >
            <Icon />
            {label}
          </button>
        ))}
      </div>
      <div className="flex flex-1 items-center justify-center pl-0.5">EN</div>
      <div className="flex w-[186px] border-l border-[#0f3ca0] bg-linear-to-b from-[#2fb0f5] via-[#139bec] via-15% to-[#1383dc] pl-[9px] shadow-[inset_1px_0_1px_#5fc6fb]">
        <div className="grid grid-cols-5 content-start gap-0.5 pt-[3px]">
          {tray.map((Icon, i) => (
            <span key={i}><Icon /></span>
          ))}
        </div>
        <div className="flex flex-1 flex-col items-center pt-0.5 pr-1.5 leading-[19px]">
          <span>9:38</span>
          <span>вторник</span>
          <span>28.07.2009</span>
        </div>
      </div>
    </footer>
  );
}

export default function App() {
  return (
    <div className="relative flex h-screen flex-col overflow-hidden bg-[#ece9d8] [font-family:'DejaVu_Sans_Condensed','DejaVu_Sans',sans-serif] text-[11px] leading-[13px] text-black">
      <Defs />
      <TitleBar />
      <Menu />
      <Toolbar />
      <AddressBar />
      <div className="flex min-h-0 flex-1">
        <Sidebar />
        <FileList />
        <Scrollbar />
      </div>
      <Taskbar />
      <ErrorDialog />
    </div>
  );
}
